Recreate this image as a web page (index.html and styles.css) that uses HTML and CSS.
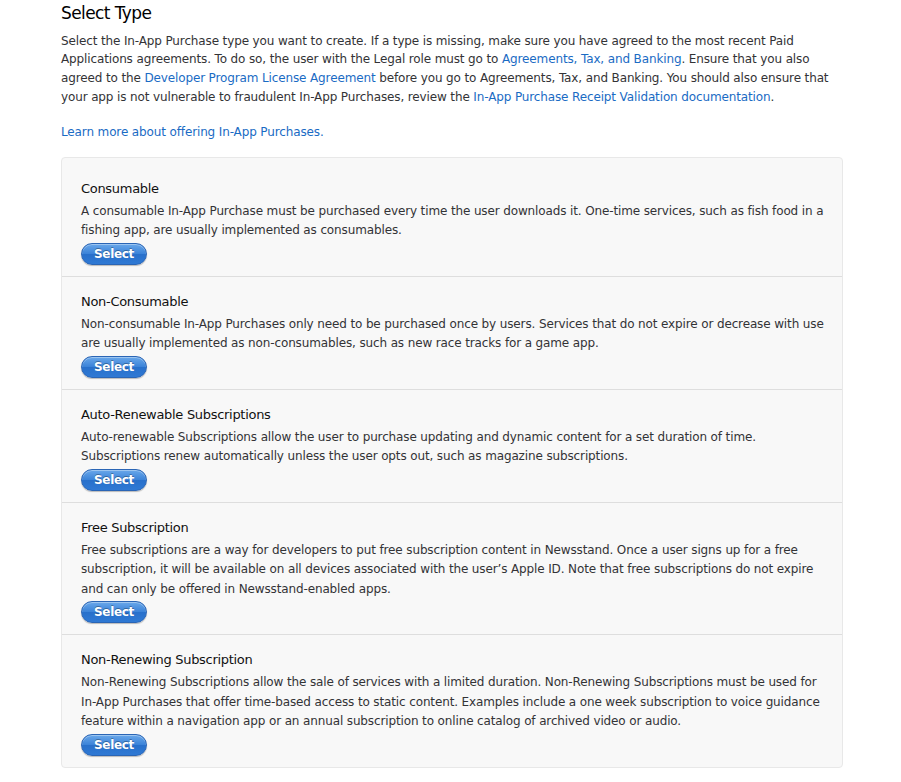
FILE: index.html
```html
<!DOCTYPE html>
<html>
<head>
<meta charset="utf-8">
<link rel="stylesheet" href="styles.css">
</head>
<body>
<div class="page">
  <h1 class="title">Select Type</h1>
  <p class="intro">Select the In-App Purchase type you want to create. If a type is missing, make sure you have agreed to the most recent Paid<br>Applications agreements. To do so, the user with the Legal role must go to <a href="#">Agreements, Tax, and Banking</a>. Ensure that you also<br>agreed to the <a href="#">Developer Program License Agreement</a> before you go to Agreements, Tax, and Banking. You should also ensure that<br>your app is not vulnerable to fraudulent In-App Purchases, review the <a href="#">In-App Purchase Receipt Validation documentation</a>.</p>
  <p class="learn"><a href="#">Learn more about offering In-App Purchases.</a></p>
  <div class="panel">
    <div class="item first">
      <h2 class="item-title">Consumable</h2>
      <p class="item-text">A consumable In-App Purchase must be purchased every time the user downloads it. One-time services, such as fish food in a<br>fishing app, are usually implemented as consumables.</p>
      <button class="btn">Select</button>
    </div>
    <div class="item">
      <h2 class="item-title">Non-Consumable</h2>
      <p class="item-text">Non-consumable In-App Purchases only need to be purchased once by users. Services that do not expire or decrease with use<br>are usually implemented as non-consumables, such as new race tracks for a game app.</p>
      <button class="btn">Select</button>
    </div>
    <div class="item">
      <h2 class="item-title">Auto-Renewable Subscriptions</h2>
      <p class="item-text">Auto-renewable Subscriptions allow the user to purchase updating and dynamic content for a set duration of time.<br>Subscriptions renew automatically unless the user opts out, such as magazine subscriptions.</p>
      <button class="btn">Select</button>
    </div>
    <div class="item">
      <h2 class="item-title">Free Subscription</h2>
      <p class="item-text">Free subscriptions are a way for developers to put free subscription content in Newsstand. Once a user signs up for a free<br>subscription, it will be available on all devices associated with the user’s Apple ID. Note that free subscriptions do not expire<br>and can only be offered in Newsstand-enabled apps.</p>
      <button class="btn">Select</button>
    </div>
    <div class="item">
      <h2 class="item-title">Non-Renewing Subscription</h2>
      <p class="item-text">Non-Renewing Subscriptions allow the sale of services with a limited duration. Non-Renewing Subscriptions must be used for<br>In-App Purchases that offer time-based access to static content. Examples include a one week subscription to voice guidance<br>feature within a navigation app or an annual subscription to online catalog of archived video or audio.</p>
      <button class="btn">Select</button>
    </div>
  </div>
</div>
</body>
</html>
```
FILE: styles.css
```css
html, body {
  margin: 0;
  padding: 0;
  background: #ffffff;
}
body {
  font-family: "Lucida Grande", "DejaVu Sans", sans-serif;
  color: #333336;
  font-size: 12px;
  letter-spacing: -0.13px;
}
.page {
  width: 782px;
  padding: 1px 0 14px 61px;
}
.title {
  margin: 0;
  font-size: 17px;
  font-weight: normal;
  line-height: 24px;
  letter-spacing: -0.6px;
  color: #000;
}
.intro {
  margin: 6.5px 0 0;
  line-height: 18.7px;
  white-space: nowrap;
}
a {
  color: #1a6bc4;
  text-decoration: none;
}
.learn {
  margin: 15.5px 0 0;
  line-height: 20px;
}
.panel {
  margin-top: 15px;
  background: #f8f8f8;
  border: 1px solid #e8e8e8;
  border-radius: 4px;
  padding-top: 6px;
}
.item {
  padding: 15px 20px 11px 19px;
  border-top: 1px solid #dedede;
}
.item.first {
  border-top: none;
}
.item-title {
  margin: 0;
  font-size: 13px;
  font-weight: normal;
  line-height: 20px;
  letter-spacing: -0.3px;
  color: #111;
}
.item-text {
  margin: 3px 0 2px;
  line-height: 19.5px;
  white-space: nowrap;
}
.btn {
  display: block;
  width: 66px;
  height: 22px;
  padding: 0;
  border: 1px solid #2a65b5;
  border-radius: 11px;
  background: linear-gradient(#6aa8ea, #3a82d8 50%, #2870cb 51%, #2f79d4);
  box-shadow: 0 1px 1px rgba(0,0,0,0.25), inset 0 1px 0 rgba(255,255,255,0.35);
  color: #fff;
  font-family: "Lucida Grande", "DejaVu Sans", sans-serif;
  font-size: 12px;
  font-weight: bold;
  letter-spacing: -0.3px;
  text-shadow: 0 -1px 0 rgba(0,0,0,0.3);
}
```
